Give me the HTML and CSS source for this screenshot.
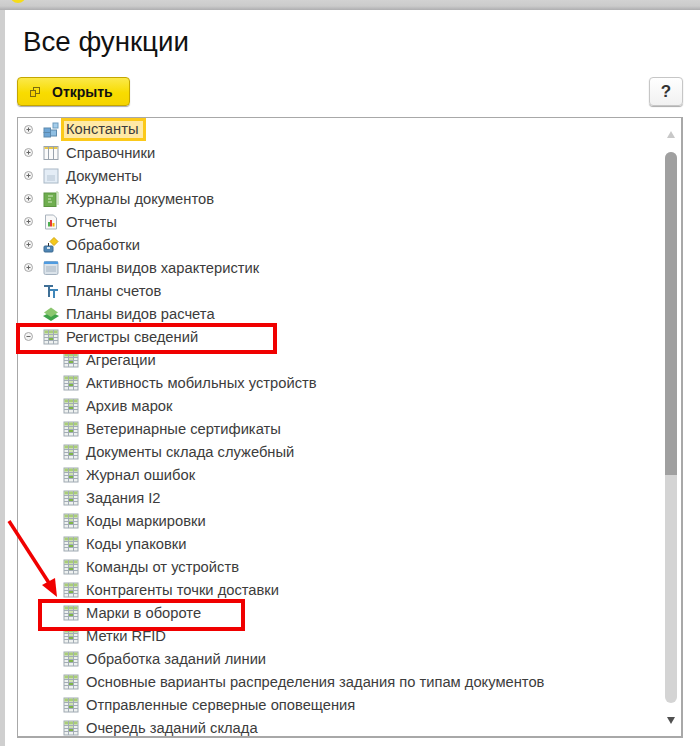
FILE: index.html
```html
<!DOCTYPE html>
<html lang="ru">
<head>
<meta charset="utf-8">
<title>Все функции</title>
<link rel="stylesheet" href="styles.css">
</head>
<body>
<svg class="defs" width="0" height="0" aria-hidden="true">
  <symbol id="plus" viewBox="0 0 9 9"><circle cx="4.5" cy="4.5" r="4" fill="#f4f4f4" stroke="#a8a8a8"/><path d="M2.5 4.5h4M4.5 2.5v4" stroke="#666" fill="none"/></symbol>
  <symbol id="minus" viewBox="0 0 9 9"><circle cx="4.5" cy="4.5" r="4" fill="#f4f4f4" stroke="#a8a8a8"/><path d="M2.5 4.5h4" stroke="#666" fill="none"/></symbol>
  <symbol id="reg" viewBox="0 0 16 16"><rect x="1" y="1" width="14" height="14" fill="#eef1f0" stroke="#9fa9b2"/><rect x="1.500" y="1.500" width="13" height="3" fill="#a9cd78"/><path d="M1 5.500h14M1 8.500h14M1 11.500h14M5.500 1v14M10.500 1v14" stroke="#a3adb6" fill="none"/><rect x="6" y="9" width="4" height="2" fill="#7fb648"/><rect x="6" y="6" width="4" height="2" fill="#cfe3ae"/></symbol>
</svg>
<div class="topbar"><span class="logo"></span></div>
<main class="window">
  <h1 class="title">Все функции</h1>
  <div class="toolbar">
    <button class="open-btn" type="button">
      <svg class="open-icon" width="12" height="12" viewBox="0 0 12 12"><rect x="4.500" y="1.500" width="6" height="6" fill="none" stroke="#7a6a10"/><rect x="1.500" y="4.500" width="5" height="6" fill="#f5d000" stroke="#7a6a10"/></svg>
      <span>Открыть</span>
    </button>
    <button class="help-btn" type="button">?</button>
  </div>
  <div class="tree">
    <ul class="rows">
      <li class="row"><svg class="exp"><use href="#plus"/></svg>
        <svg class="ico" viewBox="0 0 16 16"><rect x="1" y="6" width="6.500" height="4.500" fill="#6ea6d6" stroke="#5c89ad"/><rect x="1" y="10.500" width="6.500" height="4.500" fill="#6ea6d6" stroke="#5c89ad"/><rect x="7.500" y="8" width="6" height="6" fill="#8fbfe3" stroke="#5c89ad"/><rect x="10" y="1" width="5" height="5" fill="#a5cdea" stroke="#6d9cbf"/></svg>
        <span class="label selected">Константы</span></li>
      <li class="row"><svg class="exp"><use href="#plus"/></svg>
        <svg class="ico" viewBox="0 0 16 16"><rect x="1" y="1.500" width="14" height="13" fill="#fafafa" stroke="#9aa3ad"/><rect x="1.500" y="2" width="13" height="2" fill="#e8c84a"/><path d="M5.500 2v12M10.500 2v12" stroke="#9aa3ad" fill="none"/></svg>
        <span class="label">Справочники</span></li>
      <li class="row"><svg class="exp"><use href="#plus"/></svg>
        <svg class="ico" viewBox="0 0 16 16"><rect x="1" y="1" width="14" height="14" fill="#e4edf6" stroke="#a9b8c6"/><path d="M4 8h8M4 10h8M4 12h8" stroke="#b5c4d2" fill="none"/></svg>
        <span class="label">Документы</span></li>
      <li class="row"><svg class="exp"><use href="#plus"/></svg>
        <svg class="ico" viewBox="0 0 16 16"><rect x="1" y="2" width="12" height="13.500" fill="#6fae4f" stroke="#5b9440"/><path d="M13 1h2v13" stroke="#a9cf92" fill="none"/><path d="M5 5h5M5 8h3M5 11h4" stroke="#d5ecc5" fill="none"/></svg>
        <span class="label">Журналы документов</span></li>
      <li class="row"><svg class="exp"><use href="#plus"/></svg>
        <svg class="ico" viewBox="0 0 16 16"><path d="M2.500 1h8l3 3v11h-11z" fill="#f8f8f8" stroke="#a9b3bd"/><rect x="5" y="8" width="2" height="4.500" fill="#4caf50"/><rect x="7" y="6" width="2" height="6.500" fill="#e53935"/><rect x="9.500" y="9" width="2" height="3.500" fill="#f4b400"/></svg>
        <span class="label">Отчеты</span></li>
      <li class="row"><svg class="exp"><use href="#plus"/></svg>
        <svg class="ico" viewBox="0 0 16 16"><rect x="1" y="9" width="9" height="6" rx="1" fill="#4f86b5" stroke="#3c6a91"/><rect x="4" y="10" width="3" height="2" fill="#d8e6f0"/><path d="M5.500 9V6" stroke="#333" fill="none"/><path d="M11 0.500l4 4-4 4-4-4z" fill="#f3c81d" stroke="#d3a70f"/></svg>
        <span class="label">Обработки</span></li>
      <li class="row"><svg class="exp"><use href="#plus"/></svg>
        <svg class="ico" viewBox="0 0 16 16"><rect x="1" y="1.500" width="14" height="13" rx="1.500" fill="#dbe3ea" stroke="#a3b1bf"/><rect x="1" y="1.500" width="14" height="2.500" fill="#4f9be0"/><path d="M4 6v6M6 6v6M8 6v6M10 6v6M12 6v6" stroke="#a5b3c0" fill="none"/></svg>
        <span class="label">Планы видов характеристик</span></li>
      <li class="row"><span class="exp-gap"></span>
        <svg class="ico" viewBox="0 0 16 16"><path d="M1 2h9v2H7v10H5V4H1z" fill="#3f6f96"/><path d="M7 6h8v2h-3v7h-2V8H7z" fill="#3f86b9"/></svg>
        <span class="label">Планы счетов</span></li>
      <li class="row"><span class="exp-gap"></span>
        <svg class="ico" viewBox="0 0 16 16"><path d="M0 10l8-4 8 4-8 5z" fill="#3fa34a"/><path d="M1 6.500L8 1.500l7 5L8 11z" fill="#8cc770"/></svg>
        <span class="label">Планы видов расчета</span></li>
      <li class="row"><svg class="exp"><use href="#minus"/></svg>
        <svg class="ico"><use href="#reg"/></svg>
        <span class="label">Регистры сведений</span></li>
      <li class="row child"><svg class="ico"><use href="#reg"/></svg><span class="label">Агрегации</span></li>
      <li class="row child"><svg class="ico"><use href="#reg"/></svg><span class="label">Активность мобильных устройств</span></li>
      <li class="row child"><svg class="ico"><use href="#reg"/></svg><span class="label">Архив марок</span></li>
      <li class="row child"><svg class="ico"><use href="#reg"/></svg><span class="label">Ветеринарные сертификаты</span></li>
      <li class="row child"><svg class="ico"><use href="#reg"/></svg><span class="label">Документы склада служебный</span></li>
      <li class="row child"><svg class="ico"><use href="#reg"/></svg><span class="label">Журнал ошибок</span></li>
      <li class="row child"><svg class="ico"><use href="#reg"/></svg><span class="label">Задания I2</span></li>
      <li class="row child"><svg class="ico"><use href="#reg"/></svg><span class="label">Коды маркировки</span></li>
      <li class="row child"><svg class="ico"><use href="#reg"/></svg><span class="label">Коды упаковки</span></li>
      <li class="row child"><svg class="ico"><use href="#reg"/></svg><span class="label">Команды от устройств</span></li>
      <li class="row child"><svg class="ico"><use href="#reg"/></svg><span class="label">Контрагенты точки доставки</span></li>
      <li class="row child"><svg class="ico"><use href="#reg"/></svg><span class="label">Марки в обороте</span></li>
      <li class="row child"><svg class="ico"><use href="#reg"/></svg><span class="label">Метки RFID</span></li>
      <li class="row child"><svg class="ico"><use href="#reg"/></svg><span class="label">Обработка заданий линии</span></li>
      <li class="row child"><svg class="ico"><use href="#reg"/></svg><span class="label">Основные варианты распределения задания по типам документов</span></li>
      <li class="row child"><svg class="ico"><use href="#reg"/></svg><span class="label">Отправленные серверные оповещения</span></li>
      <li class="row child"><svg class="ico"><use href="#reg"/></svg><span class="label">Очередь заданий склада</span></li>
    </ul>
    <div class="scrollbar">
      <span class="arrow up"></span>
      <span class="thumb"><span class="thumb-dark"></span></span>
      <span class="arrow down"></span>
    </div>
  </div>
</main>
<div class="mark mark-reg"></div>
<div class="mark mark-item"></div>
<svg class="red-arrow" width="60" height="90" viewBox="0 0 60 90"><path d="M2 2L42 64" stroke="#f00000" stroke-width="3.500" fill="none"/><path d="M50 78L35 66L48 59z" fill="#f00000"/></svg>
</body>
</html>
```
FILE: styles.css
```css
* { box-sizing: border-box; }
html, body { margin: 0; padding: 0; }
body {
  width: 700px;
  height: 746px;
  overflow: hidden;
  position: relative;
  background: #fff;
  font-family: "Liberation Sans", Arial, sans-serif;
  color: #3c3c3c;
}
.defs { position: absolute; }
.topbar {
  height: 10px;
  background: linear-gradient(#d2d2d2, #cbcbcb 60%, #aeaeb0);
  overflow: hidden;
  position: relative;
}
.logo {
  position: absolute;
  left: 10px;
  top: -13px;
  width: 16px;
  height: 16px;
  border-radius: 50%;
  background: #f5dc1a;
}
.window {
  height: 736px;
  border-left: 5px solid #cfcfcf;
  padding: 0 17px 0 12px;
}
.title {
  margin: 0;
  padding: 15px 0 0 6px;
  height: 67px;
  font-size: 27.700px;
  font-weight: 400;
  line-height: 34px;
  color: #111;
}
.toolbar {
  display: flex;
  justify-content: space-between;
  align-items: flex-start;
  height: 40px;
}
.open-btn {
  width: 113px;
  height: 29px;
  display: flex;
  align-items: center;
  padding: 0 0 0 11px;
  gap: 11px;
  border: 1px solid #c4a600;
  border-radius: 4px;
  background: linear-gradient(#fbe94a, #f8dc00 55%, #f5d400);
  font: 700 14px "Liberation Sans", Arial, sans-serif;
  color: #111;
  box-shadow: 0 1px 1px #aaa;
}
.help-btn {
  width: 34px;
  height: 29px;
  border: 1px solid #c6c6c6;
  border-radius: 4px;
  background: linear-gradient(#fff, #f1f1f1);
  font: 700 17px "Liberation Sans", Arial, sans-serif;
  color: #333;
  box-shadow: 0 1px 1px #aaa;
  padding: 0;
}
.tree {
  width: 666px;
  height: 621px;
  border: 1px solid #a8a8a8;
  border-bottom-width: 2px;
  border-right-width: 2px;
  display: flex;
  overflow: hidden;
}
.rows {
  list-style: none;
  margin: 0;
  padding: 0;
  flex: 1;
  min-width: 0;
  overflow: hidden;
}
.row {
  display: flex;
  align-items: center;
  height: 23px;
  font-size: 14.730px;
  white-space: nowrap;
}
.exp {
  width: 9px;
  height: 9px;
  margin-left: 6px;
  margin-right: 10px;
  flex: none;
}
.exp-gap { width: 25px; flex: none; }
.ico {
  width: 16px;
  height: 16px;
  flex: none;
  margin-right: 7px;
}
.row.child { padding-left: 45px; }
.selected {
  margin-left: -5px;
  height: 23px;
  line-height: 17px;
  background: #ffe9a6;
  border: 3px solid #fbc91a;
  padding: 0 5px 0 2px;
}
.scrollbar {
  width: 20px;
  flex: none;
  display: flex;
  flex-direction: column;
  align-items: center;
}
.thumb {
  display: block;
  flex: none;
  width: 12px;
  height: 551px;
  margin-top: 14px;
  border-radius: 6px;
  background: #d4d4d4;
  overflow: hidden;
}
.thumb-dark {
  display: block;
  height: 323px;
  background: #a0a0a0;
}
.arrow {
  flex: none;
  width: 0;
  height: 0;
  border-left: 4px solid transparent;
  border-right: 4px solid transparent;
}
.arrow.up { border-bottom: 7px solid #c8c8c8; margin-top: 13px; }
.arrow.down { border-top: 7px solid #505050; margin-top: 14px; }
.mark {
  position: absolute;
  border: 4px solid #f00000;
}
.mark-reg { left: 16px; top: 323px; width: 261px; height: 31px; }
.mark-item { left: 38px; top: 599px; width: 207px; height: 32px; }
.red-arrow { position: absolute; left: 7px; top: 519px; }
```
